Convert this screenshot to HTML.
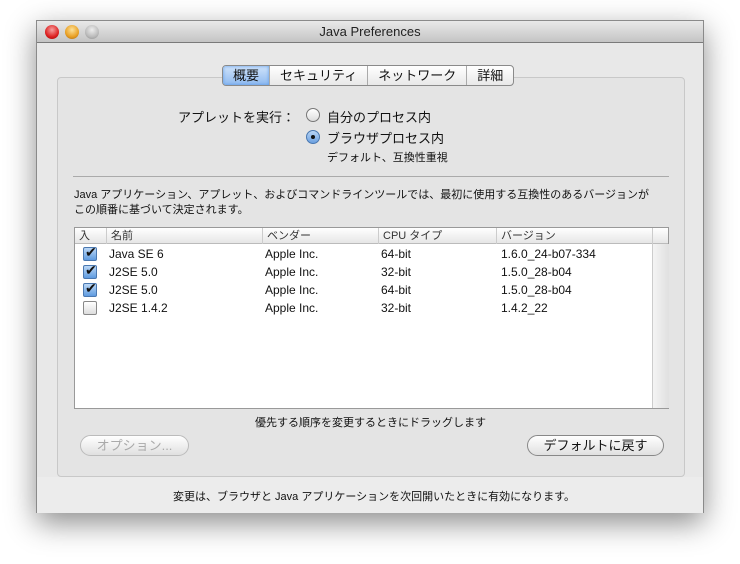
<!DOCTYPE html>
<html><head><meta charset="utf-8"><style>
*{margin:0;padding:0;box-sizing:border-box}
body{width:740px;height:564px;background:#fff;position:relative;overflow:hidden;font-family:"Liberation Sans","Noto Sans CJK JP",sans-serif;font-size:12px;color:#111}
.win{position:absolute;left:36px;top:20px;width:668px;height:493px;background:#e8e8e8;box-shadow:0 10px 28px rgba(0,0,0,.45);border:1px solid #8a8a8a}
.title{position:absolute;left:0;top:0;width:100%;height:22px;background:linear-gradient(#e9e9e9,#c4c4c4);border-bottom:1px solid #7a7a7a;text-align:center;line-height:22px;font-size:13px;color:#222}
.lt{position:absolute;top:4px;width:14px;height:14px;border-radius:50%}
.group{position:absolute;left:20px;top:56px;width:628px;height:400px;background:#e4e4e4;border:1px solid #c8c8c8;border-radius:4px}
.tabs{position:absolute;left:185px;top:44px;height:21px;display:flex;border:1px solid #8a8a8a;border-radius:4px;background:linear-gradient(#fff,#e8e8e8);font-size:13px;overflow:hidden}
.tabs div{padding:0 10px;line-height:19px;border-left:1px solid #aaa}
.tabs div:first-child{border-left:none;background:linear-gradient(#cfe3fb,#8fbaf0);box-shadow:0 0 3px #5a9ae6 inset}
.t{position:absolute;white-space:nowrap}
.radio{position:absolute;width:14px;height:14px;border-radius:50%;border:1px solid #777;background:linear-gradient(#fff,#ddd)}
.table{position:absolute;left:37px;top:206px;width:595px;height:182px;background:#fff;border:1px solid #999}
.hdr{position:absolute;left:0;top:0;width:100%;height:16px;background:linear-gradient(#fff,#e6e6e6);border-bottom:1px solid #bbb;font-size:11px;line-height:16px;color:#333}
.hdr span{position:absolute;top:0;border-left:1px solid #ccc;padding-left:4px;height:16px}
.row{position:absolute;left:0;height:18px;width:578px;font-size:12px;line-height:18px}
.row span{position:absolute}
.cb{position:absolute;left:8px;top:2px;width:14px;height:14px;border:1px solid #888;border-radius:2px;background:linear-gradient(#fff,#ddd)}
.cb.on{background:linear-gradient(#bcd8f6,#5f9be0);border-color:#4a78b0}
.cb.on:after{content:"✔";position:absolute;left:1px;top:-5px;font-size:14px;color:#111}
.btn{position:absolute;height:21px;border-radius:11px;border:1px solid #888;background:linear-gradient(#fff,#e0e0e0);text-align:center;line-height:19px;font-size:13px}
</style></head><body>
<div class="win">
<div class="title">Java Preferences</div>
<div class="lt" style="left:8px;background:radial-gradient(circle at 50% 35%,#f7a0a0,#d22 60%,#900)"></div>
<div class="lt" style="left:28px;background:radial-gradient(circle at 50% 35%,#fde29a,#e9a024 60%,#a06010)"></div>
<div class="lt" style="left:48px;background:radial-gradient(circle at 50% 35%,#eee,#bbb 60%,#888)"></div>
<div class="group"></div>
<div class="tabs"><div>概要</div><div>セキュリティ</div><div>ネットワーク</div><div>詳細</div></div>
<div class="t" style="left:141px;top:86px;font-size:13px">アプレットを実行：</div>
<div class="radio" style="left:269px;top:87px"></div>
<div class="t" style="left:290px;top:86px;font-size:13px">自分のプロセス内</div>
<div class="radio" style="left:269px;top:109px;background:linear-gradient(#b8d4f4,#6ba0e0);border-color:#4a78b0"><div style="position:absolute;left:4px;top:4px;width:4px;height:4px;border-radius:50%;background:#111"></div></div>
<div class="t" style="left:290px;top:107px;font-size:13px">ブラウザプロセス内</div>
<div class="t" style="left:290px;top:128px;font-size:11px">デフォルト、互換性重視</div>
<div style="position:absolute;left:36px;top:155px;width:596px;height:1px;background:#aaa"></div>
<div class="t" style="left:37px;top:167px;font-size:11px;line-height:15px">Java アプリケーション、アプレット、およびコマンドラインツールでは、最初に使用する互換性のあるバージョンが<br>この順番に基づいて決定されます。</div>
<div class="table">
<div class="hdr"><span style="left:0;border:none">入</span><span style="left:31px">名前</span><span style="left:187px">ベンダー</span><span style="left:303px">CPU タイプ</span><span style="left:421px">バージョン</span><span style="left:577px;width:18px"></span></div>
<div style="position:absolute;left:577px;top:16px;width:17px;height:164px;background:linear-gradient(90deg,#f4f4f4,#e0e0e0);border-left:1px solid #ccc"></div>
<div class="row" style="top:17px"><div class="cb on"></div><span style="left:34px">Java SE 6</span><span style="left:190px">Apple Inc.</span><span style="left:306px">64-bit</span><span style="left:426px">1.6.0_24-b07-334</span></div>
<div class="row" style="top:35px"><div class="cb on"></div><span style="left:34px">J2SE 5.0</span><span style="left:190px">Apple Inc.</span><span style="left:306px">32-bit</span><span style="left:426px">1.5.0_28-b04</span></div>
<div class="row" style="top:53px"><div class="cb on"></div><span style="left:34px">J2SE 5.0</span><span style="left:190px">Apple Inc.</span><span style="left:306px">64-bit</span><span style="left:426px">1.5.0_28-b04</span></div>
<div class="row" style="top:71px"><div class="cb"></div><span style="left:34px">J2SE 1.4.2</span><span style="left:190px">Apple Inc.</span><span style="left:306px">32-bit</span><span style="left:426px">1.4.2_22</span></div>
</div>
<div class="t" style="left:218px;top:393px;font-size:11px">優先する順序を変更するときにドラッグします</div>
<div class="btn" style="left:43px;top:414px;width:109px;color:#aaa;border-color:#bbb">オプション...</div>
<div class="btn" style="left:490px;top:414px;width:137px">デフォルトに戻す</div>
<div style="position:absolute;left:0;top:456px;width:100%;height:36px;background:#ececec"></div>
<div class="t" style="left:136px;top:467px;font-size:11px">変更は、ブラウザと Java アプリケーションを次回開いたときに有効になります。</div>
</div>
</body></html>
